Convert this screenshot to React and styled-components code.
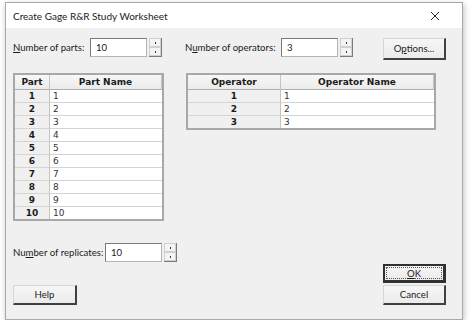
import React from 'react'
import styled, { createGlobalStyle } from 'styled-components'

const Global = createGlobalStyle`
    body {
        margin: 0;
        background: #ffffff;
        font-family: Lato, "Open Sans", sans-serif;
        font-size: 9.6px;
        color: #1b1b1b;
    }
`

const Window = styled.div`
    margin: 2px 0 0 5px;
    width: 458px;
    height: 318px;
    box-sizing: border-box;
    border: 1px solid #a9a9a9;
    display: flex;
    flex-direction: column;
    box-shadow: 1px 2px 6px rgba(0,0,0,.25);
`
const TitleBar = styled.div`
    height: 25px;
    background: #ffffff;
    display: flex;
    align-items: center;
    justify-content: space-between;
    padding: 0 22px 0 7px;
    font-size: 10px;
`
const Close = styled.svg`
    width: 10px;
    height: 10px;
`
const Body = styled.div`
    flex: 1;
    background: #f0f0f0;
    padding: 10px 16px 14px 7px;
    display: flex;
    flex-direction: column;
`
const Row = styled.div`
    display: flex;
    align-items: flex-start;
    margin-top: ${p => p.$top || 0}px;
`
const Field = styled.div`
    display: flex;
    align-items: center;
    width: ${p => p.$w}px;
    height: 19px;
`
const Label = styled.span`
    flex: 0 0 ${p => p.$w}px;
    min-width: 0;
    white-space: nowrap;
`
const U = styled.span`
    text-decoration: underline;
    text-underline-offset: 1px;
`
const Input = styled.div`
    width: 57px;
    height: 19px;
    box-sizing: border-box;
    background: #fff;
    border: 1px solid #b4b4b4;
    border-top-color: #7a7a7a;
    border-left-color: #7a7a7a;
    padding: 3px 0 0 5px;
`
const Spinner = styled.div`
    margin-left: 2px;
    width: 13px;
    height: 19px;
    display: flex;
    flex-direction: column;
    border-right: 1px solid #7a7a7a;
    border-bottom: 1px solid #7a7a7a;
    box-sizing: border-box;
`
const SpinHalf = styled.div`
    flex: 1;
    background: #f4f4f4;
    border: 1px solid #d0d0d0;
    display: flex;
    align-items: center;
    justify-content: center;
    &::after {
        content: '';
        width: 1px;
        height: 2px;
        background: #333;
    }
`
const Button = styled.div`
    width: ${p => p.$w || 63}px;
    height: ${p => p.$h || 20}px;
    box-sizing: border-box;
    background: linear-gradient(#f6f6f6, #ebebeb);
    border: 1px solid #d6d6d6;
    border-right: 2px solid #404040;
    border-bottom: 2px solid #404040;
    display: flex;
    align-items: center;
    justify-content: center;
`
const DefaultButton = styled(Button)`
    border: 2px solid #303030;
    border-right-width: 3px;
    border-bottom-width: 3px;
    padding: 1px;
`
const Focus = styled.div`
    width: 100%;
    height: 100%;
    border: 1px dotted #555;
    display: flex;
    align-items: center;
    justify-content: center;
    box-sizing: border-box;
`
const Table = styled.div`
    width: ${p => p.$w}px;
    box-sizing: border-box;
    border: 2px solid #a8a8a8;
    display: grid;
    grid-template-columns: ${p => p.$cols};
    background: #fff;
    margin-left: ${p => p.$ml || 0}px;
`
const Head = styled.div`
    height: 14px;
    background: linear-gradient(#f7f7f7, #ebebeb);
    border-right: 1px solid #c4c4c4;
    border-bottom: 1px solid #b0b0b0;
    font-family: Tahoma, "DejaVu Sans", sans-serif;
    font-weight: bold;
    font-size: 9px;
    display: flex;
    align-items: center;
    justify-content: center;
    &:last-child { border-right: none; }
`
const Num = styled.div`
    height: 12px;
    background: #f0f0f0;
    border-right: 1px solid #c4c4c4;
    border-bottom: 1px solid #d4d4d4;
    font-family: Tahoma, "DejaVu Sans", sans-serif;
    font-weight: bold;
    font-size: 9px;
    display: flex;
    align-items: center;
    justify-content: center;
    &:nth-last-child(2) { border-bottom: none; }
`
const Name = styled.div`
    height: 12px;
    border-bottom: 1px solid #d4d4d4;
    font-family: "DejaVu Sans", sans-serif;
    font-size: 9px;
    color: #333;
    padding-left: 3px;
    display: flex;
    align-items: center;
    &:last-child { border-bottom: none; }
`
const Bottom = styled.div`
    margin-top: auto;
    display: flex;
    justify-content: space-between;
    align-items: flex-end;
`
const Stack = styled.div`
    display: flex;
    flex-direction: column;
    gap: 2px;
`

const Spin = () => (
    <Spinner>
        <SpinHalf />
        <SpinHalf />
    </Spinner>
)

const parts = [1, 2, 3, 4, 5, 6, 7, 8, 9, 10]
const ops = [1, 2, 3]

export default function App() {
    return (
        <>
            <Global />
            <Window>
                <TitleBar>
                    <span>Create Gage R&amp;R Study Worksheet</span>
                    <Close viewBox="0 0 10 10">
                        <path d="M1 1L9 9M9 1L1 9" stroke="#222" strokeWidth="1" />
                    </Close>
                </TitleBar>
                <Body>
                    <Row>
                        <Field $w={172}>
                            <Label $w={77}><U>N</U>umber of parts:</Label>
                            <Input>10</Input>
                            <Spin />
                        </Field>
                        <Field $w={198}>
                            <Label $w={96}>N<U>u</U>mber of operators:</Label>
                            <Input>3</Input>
                            <Spin />
                        </Field>
                        <Button $h={22}>O<U>p</U>tions...</Button>
                    </Row>
                    <Row $top={13}>
                        <Table $w={151} $cols="35px 1fr">
                            <Head>Part</Head>
                            <Head>Part Name</Head>
                            {parts.map(n => (
                                <React.Fragment key={n}>
                                    <Num>{n}</Num>
                                    <Name>{n}</Name>
                                </React.Fragment>
                            ))}
                        </Table>
                        <Table $w={250} $ml={22} $cols="93px 1fr">
                            <Head>Operator</Head>
                            <Head>Operator Name</Head>
                            {ops.map(n => (
                                <React.Fragment key={n}>
                                    <Num>{n}</Num>
                                    <Name>{n}</Name>
                                </React.Fragment>
                            ))}
                        </Table>
                    </Row>
                    <Row $top={22}>
                        <Field $w={172}>
                            <Label $w={92}>Nu<U>m</U>ber of replicates:</Label>
                            <Input>10</Input>
                            <Spin />
                        </Field>
                    </Row>
                    <Bottom>
                        <Button $w={64}>Help</Button>
                        <Stack>
                            <DefaultButton $h={19}><Focus><U>O</U>K</Focus></DefaultButton>
                            <Button>Cancel</Button>
                        </Stack>
                    </Bottom>
                </Body>
            </Window>
        </>
    )
}
